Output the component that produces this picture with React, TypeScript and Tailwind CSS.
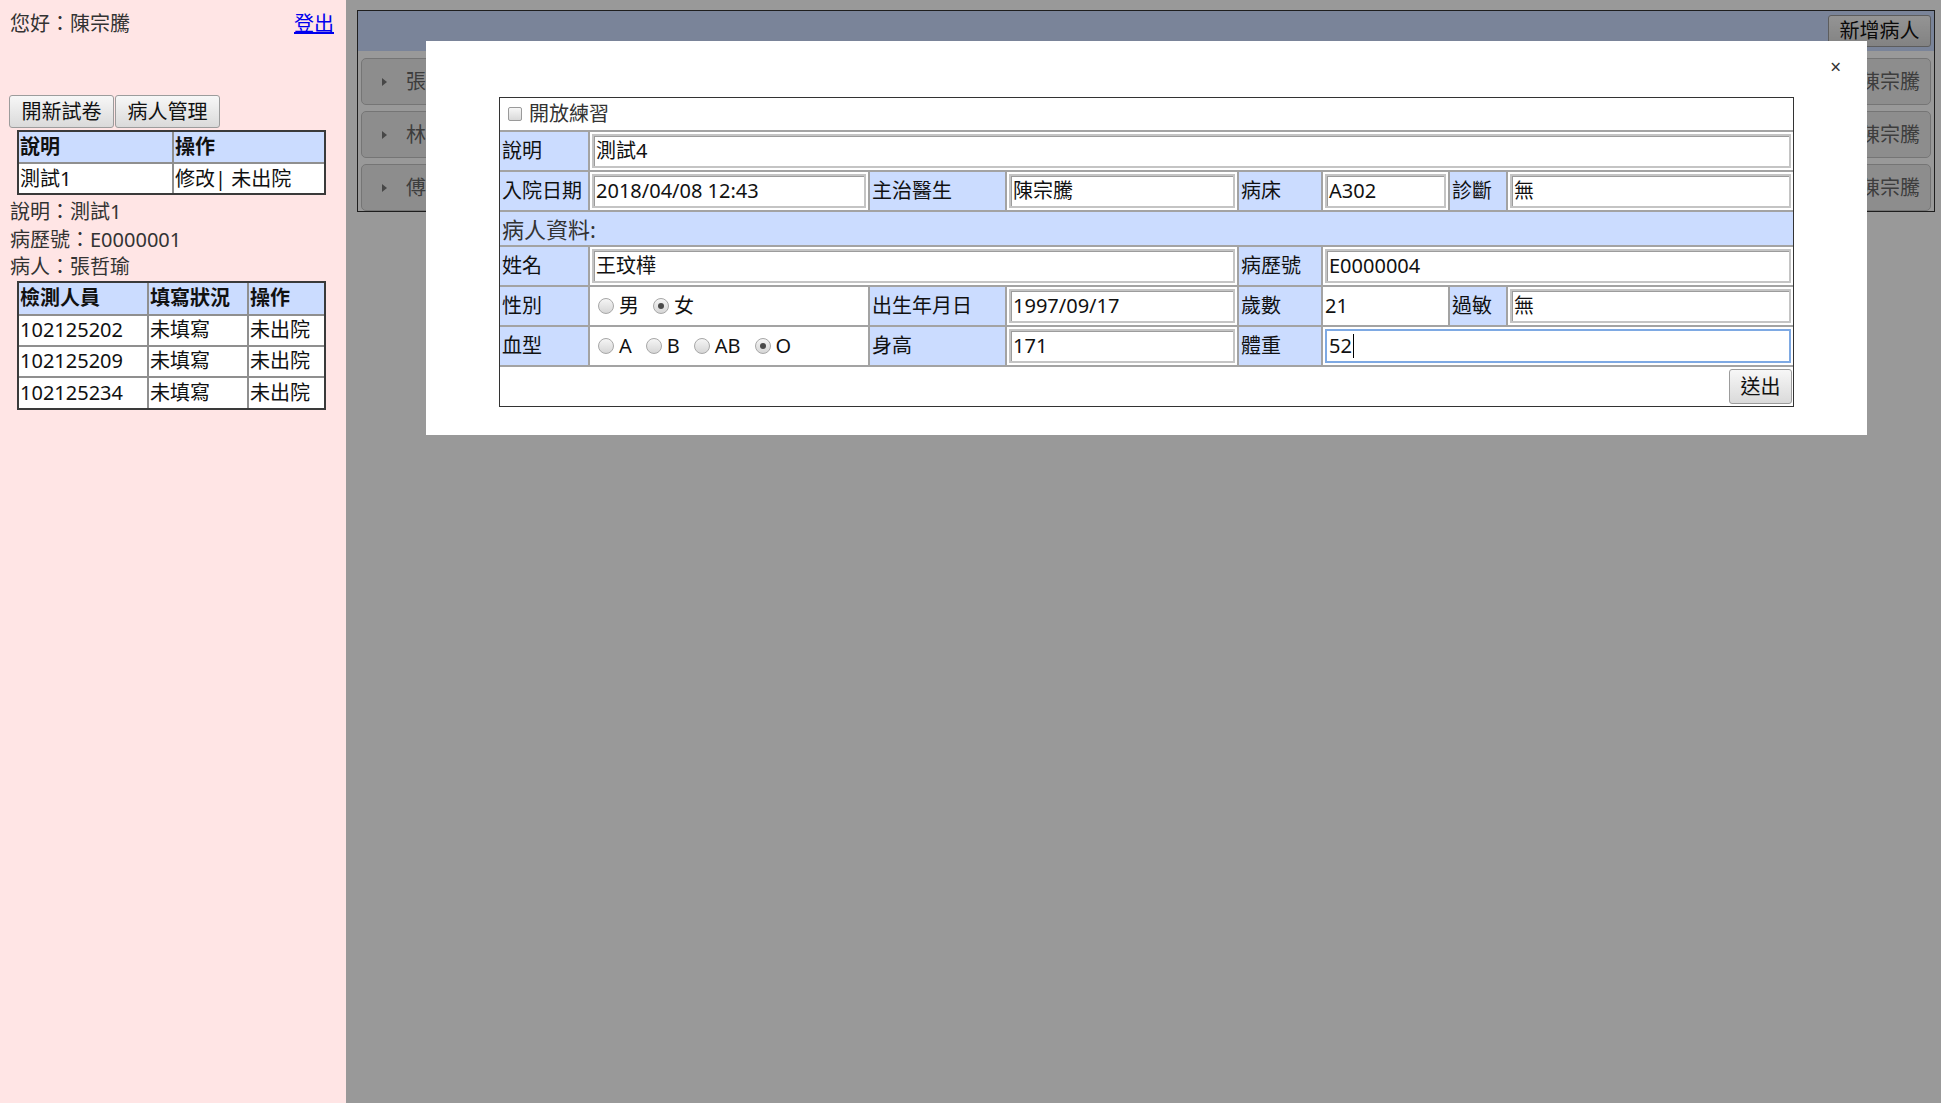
import React from "react";

function Radio({ checked }: { checked?: boolean }) {
  return (
    <span className="inline-flex items-center justify-center w-[16px] h-[16px] rounded-full border border-[#a8a8a8] bg-gradient-to-b from-[#f5f5f5] to-[#d6d6d6] mr-[5px] align-middle">
      {checked && <span className="w-[6px] h-[6px] rounded-full bg-[#4a4a4a]" />}
    </span>
  );
}

function Field({ value, focused }: { value: string; focused?: boolean }) {
  return (
    <div
      className={
        "h-[34px] w-full flex items-center px-[2px] bg-white leading-none whitespace-nowrap overflow-hidden " +
        (focused
          ? "border-2 border-[#7ea9e3]"
          : "border-2 border-[#c4c4c4] shadow-[inset_1px_1px_0_#9c9c9c]")
      }
    >
      <span>{value}</span>
      {focused && <span className="inline-block w-[1px] h-[24px] bg-black ml-[1px]" />}
    </div>
  );
}

const lbl = "bg-[#cbdcff] border-2 border-[#a3a3a3] px-[2px] text-left font-normal whitespace-nowrap align-middle";
const cell = "border-2 border-[#a3a3a3] p-[2px] bg-white align-middle";
const btn =
  "bg-gradient-to-b from-[#f7f7f7] to-[#dadada] border border-[#9c9c9c] rounded-[3px] text-[20px] leading-none text-[#111]";
const lth = "bg-[#cbdcff] border-2 border-[#8f8f8f] text-left font-bold px-[1px]";
const ltd = "border-2 border-[#8f8f8f] px-[1px]";

export default function App() {
  return (
    <div className="flex w-full h-[1103px] overflow-hidden font-['Noto_Sans','Noto_Sans_CJK_TC',sans-serif] text-[20px] text-[#111]">
      {/* Left panel */}
      <aside className="w-[346px] shrink-0 bg-[#ffe5e5]">
        <div className="flex justify-between items-center pl-[10px] pr-[12px] h-[28px] mt-[10px] leading-none">
          <span className="text-[#333]">您好：陳宗騰</span>
          <a href="#" className="text-[#0000ee] underline">登出</a>
        </div>
        <div className="flex gap-[1px] ml-[9px] mt-[57px]">
          <button className={btn + " w-[105px] h-[33px]"}>開新試卷</button>
          <button className={btn + " w-[105px] h-[33px]"}>病人管理</button>
        </div>
        <div className="ml-[17px] w-[309px] mt-[2px] border-2 border-[#3a3a3a] bg-white">
          <table className="w-full border-collapse border-hidden table-fixed leading-none">
            <colgroup>
              <col className="w-[154px]" />
              <col />
            </colgroup>
            <tbody>
              <tr className="h-[31px]">
                <th className={lth}>說明</th>
                <th className={lth}>操作</th>
              </tr>
              <tr className="h-[30px]">
                <td className={ltd}>測試1</td>
                <td className={ltd}>修改| 未出院</td>
              </tr>
            </tbody>
          </table>
        </div>
        <div className="pl-[10px] mt-[3px] leading-[27.5px] text-[#333]">
          <div>說明：測試1</div>
          <div>病歷號：E0000001</div>
          <div>病人：張哲瑜</div>
        </div>
        <div className="ml-[17px] w-[309px] border-2 border-[#3a3a3a] bg-white">
          <table className="w-full border-collapse border-hidden table-fixed leading-none">
            <colgroup>
              <col className="w-[129px]" />
              <col className="w-[100px]" />
              <col />
            </colgroup>
            <tbody>
              <tr className="h-[32px]">
                <th className={lth}>檢測人員</th>
                <th className={lth}>填寫狀況</th>
                <th className={lth}>操作</th>
              </tr>
              {["102125202", "102125209", "102125234"].map((id) => (
                <tr key={id} className="h-[31px]">
                  <td className={ltd}>{id}</td>
                  <td className={ltd}>未填寫</td>
                  <td className={ltd}>未出院</td>
                </tr>
              ))}
            </tbody>
          </table>
        </div>
      </aside>

      {/* Right area */}
      <main className="relative flex-1 bg-white pl-[11px] pr-[6px] pt-[10px]">
        <div className="border border-[#333] bg-white">
          <div className="h-[40px] bg-[#cbdcff] flex justify-end items-start pt-[4px] pr-[3px]">
            <button className={btn + " h-[32px] w-[103px]"}>新增病人</button>
          </div>
          <div className="flex flex-col gap-[6px] px-[3px] pt-[7px] pb-[0px]">
            {[
              ["張哲瑜", "陳宗騰"],
              ["林子翔", "陳宗騰"],
              ["傅家豪", "陳宗騰"],
            ].map(([n, d]) => (
              <div
                key={n}
                className="h-[47px] rounded-[5px] border border-[#c4c4c4] bg-[#ececec] flex items-center pl-[20px] pr-[10px] text-[#666] leading-none"
              >
                <span className="w-0 h-0 border-y-[4px] border-y-transparent border-l-[5px] border-l-[#777] mr-[19px]" />
                <span className="flex-1">{n}</span>
                <span>{d}</span>
              </div>
            ))}
          </div>
        </div>

        <div className="absolute inset-0 bg-black/40" />

        {/* Modal */}
        <div className="absolute left-[80px] top-[41px] w-[1441px] h-[394px] bg-white pl-[73px] pt-[56px]">
          <span className="absolute right-[26px] top-[17px] text-[19px] text-[#333] leading-none">×</span>
          <div className="w-[1295px] border border-[#333]">
            <table className="w-full border-collapse border-hidden table-fixed leading-none">
              <colgroup>
                <col className="w-[89px]" />
                <col className="w-[280px]" />
                <col className="w-[137px]" />
                <col className="w-[232px]" />
                <col className="w-[84px]" />
                <col className="w-[127px]" />
                <col className="w-[58px]" />
                <col />
              </colgroup>
              <tbody>
                <tr className="h-[33px]">
                  <td colSpan={8} className="border-2 border-[#a3a3a3] px-[8px] align-middle text-[#333]">
                    <span className="inline-flex items-center">
                      <span className="w-[14px] h-[14px] rounded-[2px] border border-[#9a9a9a] bg-gradient-to-b from-[#f7f7f7] to-[#d9d9d9] mr-[7px]" />
                      開放練習
                    </span>
                  </td>
                </tr>
                <tr className="h-[39px]">
                  <th className={lbl}>說明</th>
                  <td colSpan={7} className={cell}>
                    <Field value="測試4" />
                  </td>
                </tr>
                <tr className="h-[40px]">
                  <th className={lbl}>入院日期</th>
                  <td className={cell}>
                    <Field value="2018/04/08 12:43" />
                  </td>
                  <th className={lbl}>主治醫生</th>
                  <td className={cell}>
                    <Field value="陳宗騰" />
                  </td>
                  <th className={lbl}>病床</th>
                  <td className={cell}>
                    <Field value="A302" />
                  </td>
                  <th className={lbl}>診斷</th>
                  <td className={cell}>
                    <Field value="無" />
                  </td>
                </tr>
                <tr className="h-[35px]">
                  <td colSpan={8} className={lbl + " text-[#333] text-[22px]"}>
                    病人資料:
                  </td>
                </tr>
                <tr className="h-[40px]">
                  <th className={lbl}>姓名</th>
                  <td colSpan={3} className={cell}>
                    <Field value="王玟樺" />
                  </td>
                  <th className={lbl}>病歷號</th>
                  <td colSpan={3} className={cell}>
                    <Field value="E0000004" />
                  </td>
                </tr>
                <tr className="h-[40px]">
                  <th className={lbl}>性別</th>
                  <td className={cell + " pl-[8px]"}>
                    <span className="inline-flex items-center">
                      <Radio />
                      <span className="mr-[14px]">男</span>
                      <Radio checked />
                      <span>女</span>
                    </span>
                  </td>
                  <th className={lbl}>出生年月日</th>
                  <td className={cell}>
                    <Field value="1997/09/17" />
                  </td>
                  <th className={lbl}>歲數</th>
                  <td className={cell}>21</td>
                  <th className={lbl}>過敏</th>
                  <td className={cell}>
                    <Field value="無" />
                  </td>
                </tr>
                <tr className="h-[40px]">
                  <th className={lbl}>血型</th>
                  <td className={cell + " pl-[8px]"}>
                    <span className="inline-flex items-center">
                      <Radio />
                      <span className="mr-[14px]">A</span>
                      <Radio />
                      <span className="mr-[14px]">B</span>
                      <Radio />
                      <span className="mr-[14px]">AB</span>
                      <Radio checked />
                      <span>O</span>
                    </span>
                  </td>
                  <th className={lbl}>身高</th>
                  <td className={cell}>
                    <Field value="171" />
                  </td>
                  <th className={lbl}>體重</th>
                  <td colSpan={3} className={cell}>
                    <Field value="52" focused />
                  </td>
                </tr>
                <tr className="h-[40px]">
                  <td colSpan={8} className="border-2 border-[#a3a3a3] p-[1px] text-right align-middle">
                    <button className={btn + " h-[35px] w-[63px]"}>送出</button>
                  </td>
                </tr>
              </tbody>
            </table>
          </div>
        </div>
      </main>
    </div>
  );
}
